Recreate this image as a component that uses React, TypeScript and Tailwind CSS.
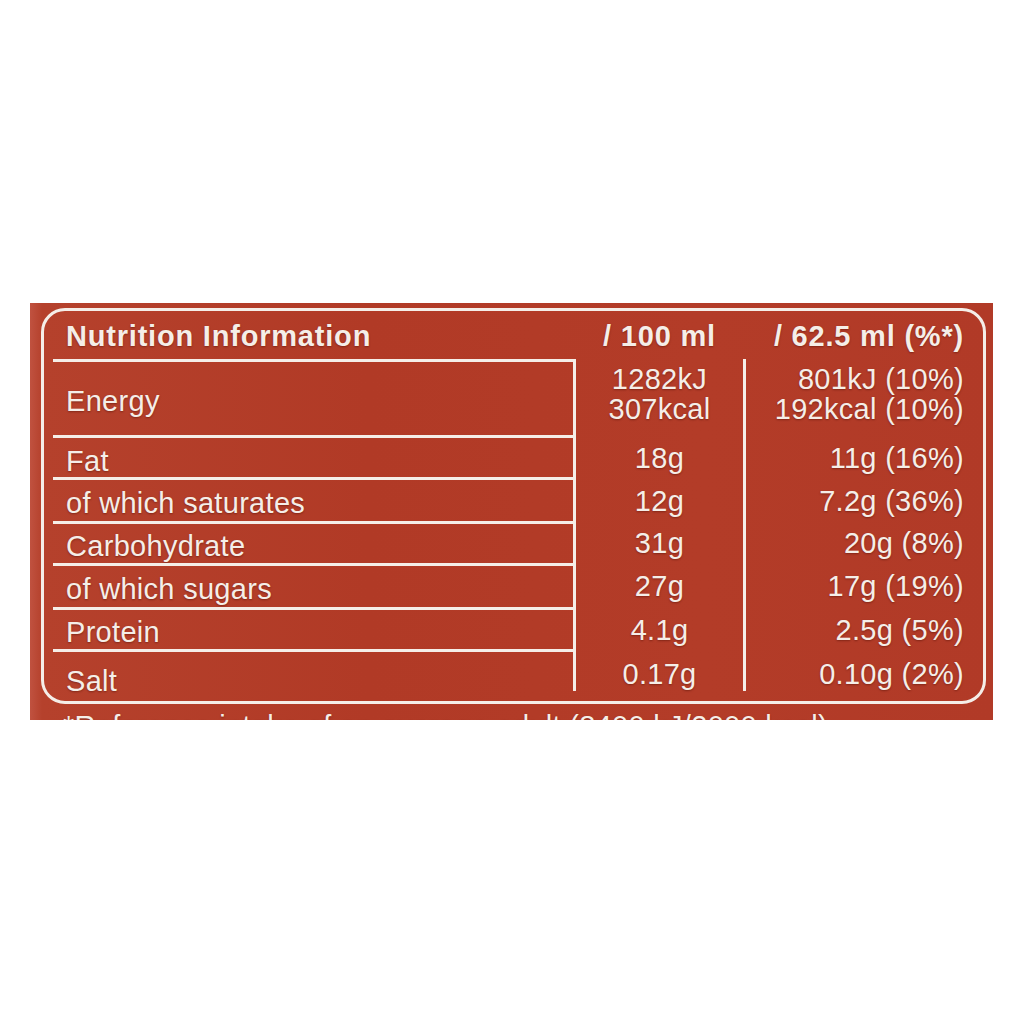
const rows = [
  { label: 'Energy', per100: ['1282kJ', '307kcal'], perServing: ['801kJ (10%)', '192kcal (10%)'], h: 'h-[76px]', lab: 'pt-[4px]', val: 'pb-[6px]' },
  { label: 'Fat', per100: ['18g'], perServing: ['11g (16%)'], h: 'h-[42px]', lab: 'pt-[6px]', val: 'pt-[4px]' },
  { label: 'of which saturates', per100: ['12g'], perServing: ['7.2g (36%)'], h: 'h-[44px]', lab: 'pt-[4px]', val: 'pt-[4px]' },
  { label: 'Carbohydrate', per100: ['31g'], perServing: ['20g (8%)'], h: 'h-[42px]', lab: 'pt-[4px]', val: 'pt-[2px]' },
  { label: 'of which sugars', per100: ['27g'], perServing: ['17g (19%)'], h: 'h-[44px]', lab: 'pt-[4px]', val: 'pt-[2px]' },
  { label: 'Protein', per100: ['4.1g'], perServing: ['2.5g (5%)'], h: 'h-[42px]', lab: 'pt-[5px]', val: 'pt-[3px]' },
  { label: 'Salt', per100: ['0.17g'], perServing: ['0.10g (2%)'], h: 'h-[42px]', lab: 'pt-[18px] leading-[20px]', val: 'pt-[8px]' },
];

const shadow = '[text-shadow:0_1px_2px_rgba(70,12,0,0.45)]';

export default function App() {
  return (
    <div className="w-[1024px] h-[1024px] bg-white pt-[303px] font-['Liberation_Sans',Arial,sans-serif] text-[#f5eee8]">
      <div className="ml-[30px] w-[963px] h-[417px] overflow-hidden pt-[5px] pl-[11px] bg-[linear-gradient(90deg,#c05240_0px,#b5412c_12px,#b13a26_35%,#b33c28_70%,#b13a27_100%)]">
        <div className="w-[945px] h-[396px] border-[3px] border-[#f5eee8] rounded-[24px] pl-[9px]">
          {/* header */}
          <div className={`grid grid-cols-[523px_167px_240px] h-[48px] items-center pt-[4px] text-[29px] font-bold tracking-[0.8px] ${shadow}`}>
            <div className="pl-[13px]">Nutrition Information</div>
            <div className="text-center">/ 100 ml</div>
            <div className="text-right pr-[19px]">/ 62.5 ml (%*)</div>
          </div>

          {rows.map((r) => (
            <div
              key={r.label}
              className={`grid grid-cols-[523px_167px_240px] ${r.h} text-[29px] tracking-[0.3px] leading-[30px] ${shadow}`}
            >
              <div className={`flex items-center pl-[13px] border-t-[3px] border-r-[3px] border-[#f5eee8] ${r.lab}`}>
                {r.label}
              </div>
              <div className={`flex flex-col items-center justify-center ${r.val}`}>
                {r.per100.map((v) => (
                  <span key={v}>{v}</span>
                ))}
              </div>
              <div className={`flex flex-col items-end justify-center pr-[19px] border-l-[3px] border-[#f5eee8] ${r.val}`}>
                {r.perServing.map((v) => (
                  <span key={v}>{v}</span>
                ))}
              </div>
            </div>
          ))}
        </div>

        {/* footnote, cut off by the photo edge */}
        <div className={`flex justify-end pr-[165px] mt-[8px] whitespace-nowrap text-[29px] leading-none tracking-[0.3px] ${shadow}`}>
          *Reference intake of an average adult (8400 kJ/2000 kcal)
        </div>
      </div>
    </div>
  );
}
